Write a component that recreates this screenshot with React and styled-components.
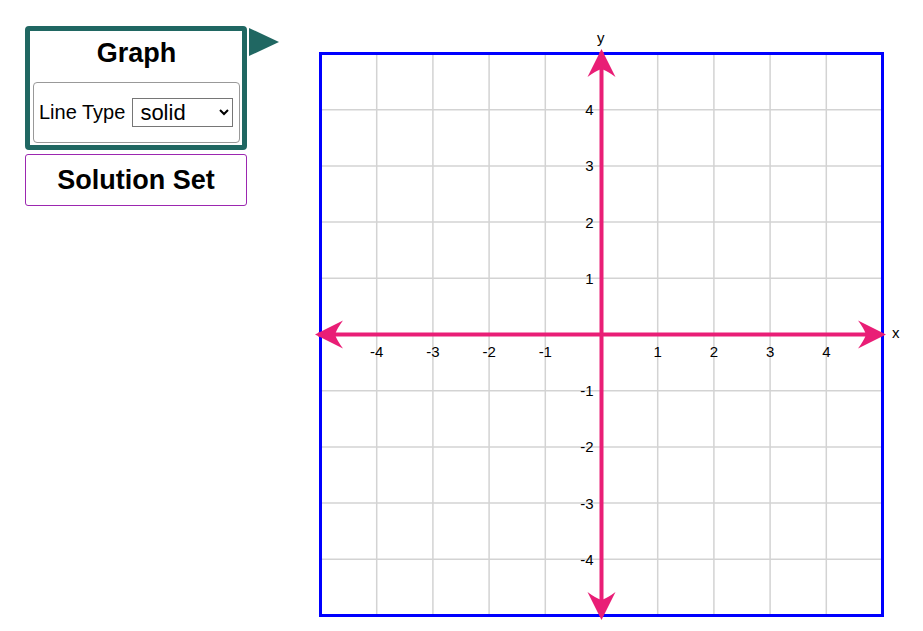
import React from "react";
import styled, { createGlobalStyle } from "styled-components";

const GlobalStyle = createGlobalStyle`
	html, body {
		margin: 0;
		padding: 0;
		background: #ffffff;
		overflow: hidden;
	}
	body {
		font-family: "Liberation Sans", Arial, sans-serif;
		color: #000;
	}
`;

const TEAL = "#206762";
const PINK = "#e91e76";

const Page = styled.div`
	display: flex;
	align-items: flex-start;
	padding: 20px 0 0 25px;
	width: 923px;
	height: 631px;
	box-sizing: border-box;
`;

const Sidebar = styled.div`
	display: flex;
	flex-direction: column;
	gap: 4px;
	width: 222px;
	margin-top: 6px;
`;

const GraphCard = styled.div`
	position: relative;
	box-sizing: border-box;
	width: 222px;
	border: 5px solid ${TEAL};
	border-radius: 4px;
	padding: 6px 2px 2px 3px;
	background: #fff;

	&::after {
		content: "";
		position: absolute;
		top: -3px;
		right: -37px;
		width: 0;
		height: 0;
		border-left: 30px solid ${TEAL};
		border-top: 14px solid transparent;
		border-bottom: 14px solid transparent;
	}
`;

const Title = styled.div`
	font-size: 27px;
	font-weight: bold;
	line-height: 32px;
	text-align: center;
	margin-bottom: 13px;
`;

const OptionBox = styled.div`
	display: flex;
	align-items: center;
	gap: 7px;
	height: 61px;
	box-sizing: border-box;
	border: 1px solid #999;
	border-radius: 4px;
	padding: 0 5px;
`;

const Label = styled.span`
	font-size: 20px;
	white-space: nowrap;
`;

const Select = styled.select`
	font-family: "Liberation Sans", Arial, sans-serif;
	font-size: 22px;
	width: 101px;
	height: 29px;
	box-sizing: border-box;
	border: 1px solid #767676;
	border-radius: 0;
	background: #fff;
	color: #000;
	padding: 0 0 0 3px;
`;

const SolutionButton = styled.div`
	box-sizing: border-box;
	width: 222px;
	height: 52px;
	border: 1px solid #9c27b0;
	border-radius: 3px;
	display: flex;
	align-items: center;
	justify-content: center;
	font-size: 27px;
	font-weight: bold;
`;

const Board = styled.svg`
	display: block;
	margin-left: 53px;
	flex: none;
	font-family: "Liberation Sans", Arial, sans-serif;
`;

const LEFT = 320.5;
const TOP = 53.5;
const SIZE = 562;
const STEP = SIZE / 10;
const CX = LEFT + STEP * 5;
const CY = TOP + STEP * 5;

// right-pointing arrowhead, tip at 0,0
const ARROW = "M0 0 L-28 -14 Q-22 -6 -20 0 Q-22 6 -28 14 Z";

function Arrow({ x, y, angle }) {
	return (
		<path d={ARROW} fill={PINK} transform={`translate(${x} ${y}) rotate(${angle})`} />
	);
}

function Graph() {
	const ks = [1, 2, 3, 4, 5, 6, 7, 8, 9];
	const ticks = [-4, -3, -2, -1, 1, 2, 3, 4];
	return (
		<Board width="620" height="611" viewBox="300 20 620 611">
			{ks.map((k) => (
				<g key={k} stroke="#d3d3d3" strokeWidth="1.5">
					<line x1={LEFT + k * STEP} y1={TOP} x2={LEFT + k * STEP} y2={TOP + SIZE} />
					<line x1={LEFT} y1={TOP + k * STEP} x2={LEFT + SIZE} y2={TOP + k * STEP} />
				</g>
			))}
			<rect x={LEFT} y={TOP} width={SIZE} height={SIZE} fill="none" stroke="#0000ff" strokeWidth="3" />

			<line x1={318} y1={CY} x2={880} y2={CY} stroke={PINK} strokeWidth="4" />
			<line x1={CX} y1={52} x2={CX} y2={616} stroke={PINK} strokeWidth="4" />
			<Arrow x={886} y={CY} angle={0} />
			<Arrow x={315} y={CY} angle={180} />
			<Arrow x={CX} y={49} angle={-90} />
			<Arrow x={CX} y={620} angle={90} />

			{ticks.map((t) => (
				<text key={"x" + t} x={CX + t * STEP} y={357} fontSize="15" textAnchor="middle">
					{t}
				</text>
			))}
			{ticks.map((t) => (
				<text key={"y" + t} x={593.5} y={CY - t * STEP + 5.5} fontSize="15" textAnchor="end">
					{t}
				</text>
			))}
			<text x={597} y={43} fontSize="15">y</text>
			<text x={892} y={338} fontSize="15">x</text>
		</Board>
	);
}

export default function App() {
	return (
		<>
			<GlobalStyle />
			<Page>
				<Sidebar>
					<GraphCard>
						<Title>Graph</Title>
						<OptionBox>
							<Label>Line Type</Label>
							<Select defaultValue="solid">
								<option value="solid">solid</option>
								<option value="dashed">dashed</option>
							</Select>
						</OptionBox>
					</GraphCard>
					<SolutionButton>Solution Set</SolutionButton>
				</Sidebar>
				<Graph />
			</Page>
		</>
	);
}
